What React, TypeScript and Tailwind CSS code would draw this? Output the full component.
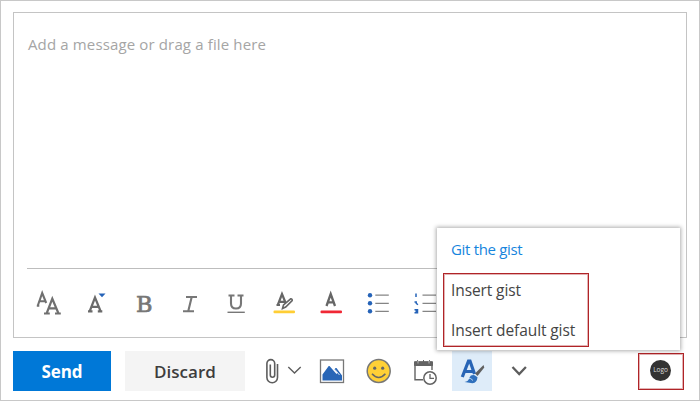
import type { ReactNode } from "react";

function Icon({ box, label, className, children }: { box: string; label: string; className: string; children: ReactNode }) {
  return (
    <button aria-label={label} className={`shrink-0 ${className}`}>
      <svg viewBox={box} className="block h-full w-full" fill="none">
        {children}
      </svg>
    </button>
  );
}

function Toolbar() {
  const cell = "h-10 w-[47px]";
  return (
    <div className="-ml-px mt-[15px] flex h-10">
      <Icon box="26 284 47 40" label="Font" className={cell}>
        <path d="M38 305l4.200-12 4 10M39.700 301.300h5.500M36.800 305.700h2.500" stroke="#707070" strokeWidth="2.100" />
        <path d="M46.800 313l5.500-14.300 6 14.300M48.500 308.300h8M44 313.500h5.800M55 313.500h5.800" stroke="#707070" strokeWidth="2.200" />
      </Icon>
      <Icon box="73 284 47 40" label="Font size" className={cell}>
        <path d="M89.800 311l5.200-13.500 5.500 13.500M91.500 306.800h7.300M88 311.300h4.500M97.800 311.300h4.500" stroke="#6b6b6b" strokeWidth="2.200" />
        <path d="M98.500 293.500h7l-3.500 3.800z" fill="#2563b8" />
      </Icon>
      <Icon box="120 284 47 40" label="Bold" className={cell}>
        <text x="136" y="311.500" fontSize="22" textLength="16.500" lengthAdjust="spacingAndGlyphs" fill="#777" stroke="#777" strokeWidth=".7" className="font-['DejaVu_Serif',serif]">B</text>
      </Icon>
      <Icon box="167 284 47 40" label="Italic" className={cell}>
        <path d="M186 297h11M183 311.200h11M191.700 297l-3.400 14" stroke="#777" strokeWidth="2.100" />
      </Icon>
      <Icon box="214 284 47 40" label="Underline" className={cell}>
        <path d="M228.500 295.500h6M237.500 295.500h6M231 296v7.500q0 5 5 5t5-5v-7.500" stroke="#777" strokeWidth="2.100" />
        <path d="M227.500 312.300h17.300" stroke="#777" strokeWidth="1.400" />
      </Icon>
      <Icon box="261 284 47 40" label="Highlight" className={cell}>
        <path d="M277.800 305l4.200-11 4.500 11M279.500 301.800h5.500M276.500 305h3.500" stroke="#666" strokeWidth="2.200" />
        <path d="M282.500 308.500l1-3.500 7.200-6.200q1.700-.2 1.500 1.800l-6.500 6.500z" fill="#fff" stroke="#666" strokeWidth="1.600" />
        <rect x="273.500" y="310.500" width="21.500" height="2.800" rx="1" fill="#ffce35" />
      </Icon>
      <Icon box="308 284 47 40" label="Font color" className={cell}>
        <path d="M326.500 306l4.200-12 4.300 12M327.900 302.300h5.600" stroke="#666" strokeWidth="2.300" />
        <rect x="320.500" y="310.500" width="21.500" height="2.800" rx="1" fill="#f02835" />
      </Icon>
      <Icon box="355 284 47 40" label="Bullets" className={cell}>
        <g fill="#2563b8">
          <circle cx="370" cy="295.200" r="2.200" />
          <circle cx="370" cy="303.300" r="2.200" />
          <circle cx="370" cy="311.300" r="2.200" />
        </g>
        <path d="M375.300 295.200h13.500M375.300 303.300h13.500M375.300 311.300h13.500" stroke="#858585" strokeWidth="1.300" />
      </Icon>
      <Icon box="402 284 47 40" label="Numbering" className={cell}>
        <path d="M416 293.500v3.500M414.500 302h1.700v1.200l1.700 1.600M414.500 309.700h3v1.500h-2M417.500 311.200v1.600h-3" stroke="#2563b8" strokeWidth="1.500" />
        <path d="M422.500 295.200h13.500M422.500 303.300h13.500M422.500 311.300h13.500" stroke="#858585" strokeWidth="1.300" />
      </Icon>
    </div>
  );
}

function GistMenu() {
  return (
    <div className="absolute left-[436px] top-[227px] h-[122px] w-[243px] bg-white pl-[6px] text-[15px] shadow-[0_0_4px_1px_rgba(0,0,0,0.32)]">
      <div className="h-[45px] pl-[8px] pt-[9px] leading-6 tracking-[-0.32px] text-[#1685dd]">Git the gist</div>
      <div className="h-[74px] w-[146px] border border-[#b02428] pl-[7px] pt-[4px] text-[#444] shadow-[inset_0_0_0_1px_rgba(176,36,40,0.35)]">
        <div className="h-10 text-[15.5px] leading-6 tracking-[-0.1px]">Insert gist</div>
        <div className="whitespace-nowrap text-[15.5px] leading-6 tracking-[-0.1px]">Insert default gist</div>
      </div>
    </div>
  );
}

export default function App() {
  return (
    <div className="relative flex h-[401px] w-[700px] flex-col overflow-hidden border border-[#c8c8c8] bg-white px-3 pt-[11px] font-['Open_Sans','Noto_Sans',sans-serif]">
      <div className="h-[326px] w-[674px] border border-[#c4c4c4] pl-[13px]">
        <div className="h-[255px] pl-[1px] pt-[19px] text-[15px] leading-6 tracking-[0.14px] text-[#a5a5a5]">Add a message or drag a file here</div>
        <div className="mr-[14px] border-t border-[#bdbdbd]" />
        <Toolbar />
      </div>
      <div className="mt-[13px] flex h-[40px] items-stretch">
        <button className="w-[98px] bg-[#0078d7] pt-[2px] text-[17px] font-bold tracking-[-0.1px] text-white">Send</button>
        <button className="ml-[14px] w-[120px] bg-[#f4f4f4] pt-[2px] text-[17px] font-semibold tracking-[0.03px] text-[#3d3d3d]">Discard</button>
        <Icon box="258 350.500 50 40" label="Attach" className="ml-[13px] w-[50px]">
          <path d="M277.500 363.500V377a5.300 5.300 0 0 1-10.600 0v-14a3.900 3.900 0 0 1 7.800 0v11.500a2.200 2.200 0 0 1-4.400 0V364" stroke="#5d5d5d" strokeWidth="1.600" />
          <path d="M288.300 366.500l6.200 6 6.200-6" stroke="#5d5d5d" strokeWidth="1.400" />
        </Icon>
        <Icon box="308 350.500 48 40" label="Picture" className="w-12">
          <rect x="320.500" y="359.500" width="23" height="22.500" fill="#fff" stroke="#777" strokeWidth="1.300" />
          <path d="M322.500 380v-6l6.200-8.500h.8l7 8 1-1-3-3.500 1-1.500h1l5.500 7.500v5z" fill="#2866b7" />
          <path d="M335 369l4.500 5.500" stroke="#fff" strokeWidth=".8" />
        </Icon>
        <Icon box="356 350.500 46 40" label="Emoji" className="w-[46px]">
          <circle cx="378.700" cy="370.500" r="11.500" fill="#ffd036" stroke="#777" strokeWidth="1.500" />
          <circle cx="374.700" cy="367.700" r="1.600" fill="#666" />
          <circle cx="382.700" cy="367.700" r="1.600" fill="#666" />
          <path d="M372 373.300q6.700 7.500 13.400 0" stroke="#666" strokeWidth="1.600" />
        </Icon>
        <Icon box="402 350.500 50 40" label="Schedule" className="w-[50px]">
          <path d="M423 379.300h-8V361.500h17v8" stroke="#636363" strokeWidth="1.400" />
          <path d="M414.500 361.500h18v3.500h-18zM417.500 359.500v5M423.500 359.500v5M429.500 359.500v5" fill="#636363" stroke="#636363" strokeWidth="1" />
          <path d="M418 360v3M429 360v3" stroke="#ddd" strokeWidth=".7" />
          <circle cx="430" cy="377.500" r="6.200" fill="#fff" stroke="#636363" strokeWidth="1.500" />
          <path d="M430 373.500v4.300h4" stroke="#636363" strokeWidth="1.300" />
        </Icon>
        <Icon box="452.500 350.500 40 40" label="Formatting" className="w-10 bg-[#deecf9]">
          <path d="M462.800 376.500l6.200-16h1.500l4.500 13M464.800 371h9" stroke="#2764b5" strokeWidth="3.200" />
          <path d="M465 381.500q4-.5 5-4.500 1.200-3 5-2.300l3 2q-.5 5.500-5 6z" fill="#2f70bd" />
          <path d="M468.500 377.500q3 0 5 2.500" stroke="#deecf9" strokeWidth=".8" />
          <path d="M475.500 373l8.500-8.500.8 2.500-6.800 8.500z" fill="#606060" />
        </Icon>
        <Icon box="492 350.500 50 40" label="More" className="w-[50px]">
          <path d="M512.500 366.500l6.700 7 6.700-7" stroke="#5d5d5d" strokeWidth="2.300" />
        </Icon>
        <button className="ml-[96px] mt-[2px] flex h-[37px] w-[46px] shrink-0 items-center justify-center border border-[#b02428] pb-[2px] pr-[1px] shadow-[inset_0_0_0_1px_rgba(176,36,40,0.35)]">
          <span className="flex h-[21px] w-[21px] items-center justify-center rounded-full bg-[#333] text-[6.500px] leading-none text-[#ddd]">Logo</span>
        </button>
      </div>
      <GistMenu />
    </div>
  );
}
